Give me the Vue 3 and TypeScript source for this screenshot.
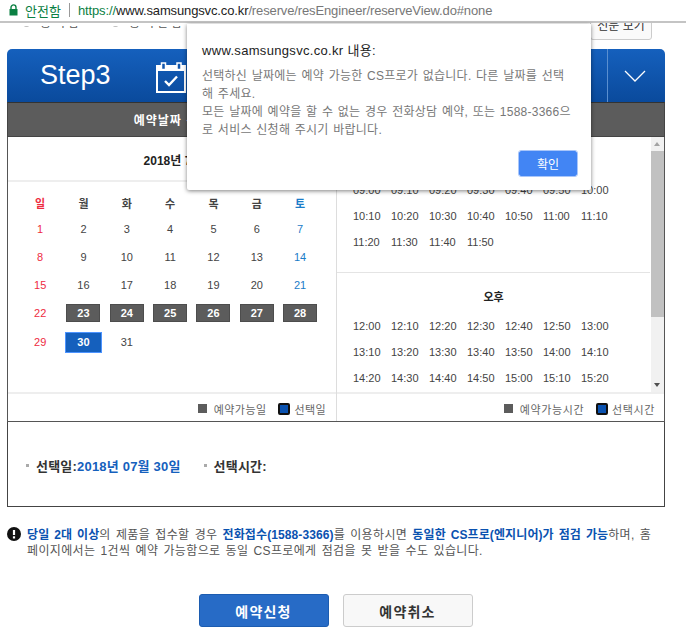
<template>
  <div class="page">
    <header class="chrome">
      <svg class="lock" width="9" height="12" viewBox="0 0 9 12">
        <path d="M2 5.5V3.4a2.5 2.5 0 0 1 5 0v2.1" fill="none" stroke="#0b8043" stroke-width="1.4" />
        <rect x="0.5" y="5" width="8" height="6.5" fill="#0b8043" />
      </svg>
      <span class="secure">안전함</span>
      <span class="chrome-sep"></span>
      <span class="url"><span class="scheme">https://</span><span class="host">www.samsungsvc.co.kr</span>/reserve/resEngineer/reserveView.do#none</span>
    </header>

    <div class="cut-row">
      <div class="cut-radios">
        <span class="cut-radio"><i></i>동의함</span>
        <span class="cut-radio"><i></i>동의안함</span>
      </div>
      <button type="button" class="cut-button">전문 보기</button>
    </div>

    <main class="content">
      <section class="panel">
        <div class="step-head">
          <span class="step-title">Step3</span>
          <svg class="step-icon" width="30" height="31" viewBox="0 0 30 31">
            <rect x="1" y="4" width="28" height="26" fill="none" stroke="#fff" stroke-width="2" />
            <rect x="1" y="4" width="28" height="5" fill="#fff" />
            <rect x="5.500" y="1" width="4" height="6.500" fill="#1256ac" stroke="#fff" stroke-width="1.500" />
            <rect x="21" y="1" width="4" height="6.500" fill="#1256ac" stroke="#fff" stroke-width="1.500" />
            <path d="M9 19l4 4 8-8.500" fill="none" stroke="#fff" stroke-width="2.400" />
          </svg>
          <span class="step-toggle">
            <svg width="22" height="12" viewBox="0 0 22 12"><path d="M1 1l10 10L21 1" fill="none" stroke="#fff" stroke-width="1.300" /></svg>
          </span>
        </div>

        <div class="col-head">
          <span>예약날짜 선택</span>
          <span>예약시간 선택</span>
        </div>

        <div class="booking">
          <div class="date-col">
            <div class="month">2018년 7월</div>
            <div class="calendar">
              <span v-for="w in weekdays" :key="w.label" class="weekday" :class="w.cls">{{ w.label }}</span>
              <span
                v-for="d in days"
                :key="d"
                class="day"
                :class="dayClass(d)"
              ><b>{{ d }}</b></span>
            </div>
            <div class="legend">
              <span class="swatch swatch--gray"></span><span class="legend-text">예약가능일</span>
              <span class="swatch swatch--blue"></span><span class="legend-text legend-text--last">선택일</span>
            </div>
          </div>

          <div class="time-col">
            <div class="time-scroll">
              <div class="time-list">
                <div class="period period--am">
                  <div class="period-title">오전</div>
                  <div class="times">
                    <span v-for="t in morning" :key="t">{{ t }}</span>
                  </div>
                </div>
                <div class="period period--pm">
                  <div class="period-title">오후</div>
                  <div class="times">
                    <span v-for="t in afternoon" :key="t">{{ t }}</span>
                  </div>
                </div>
              </div>
              <div class="scrollbar">
                <span class="arrow arrow--up"></span>
                <span class="thumb"></span>
                <span class="arrow arrow--down"></span>
              </div>
            </div>
            <div class="legend legend--time">
              <span class="swatch swatch--gray"></span><span class="legend-text">예약가능시간</span>
              <span class="swatch swatch--blue"></span><span class="legend-text legend-text--last">선택시간</span>
            </div>
          </div>
        </div>
      </section>

      <section class="summary">
        <span class="summary-item"><i></i>선택일:<em>2018년 07월 30일</em></span>
        <span class="summary-item"><i></i>선택시간:</span>
      </section>

      <section class="notice">
        <svg class="notice-icon" width="14" height="14" viewBox="0 0 14 14">
          <circle cx="7" cy="7" r="7" fill="#111" />
          <path d="M7 3v5" stroke="#fff" stroke-width="2.200" />
          <rect x="5.900" y="9.300" width="2.200" height="2.200" fill="#fff" />
        </svg>
        <p>
          <strong>당일 2대 이상</strong>의 제품을 접수할 경우 <strong>전화접수(1588-3366)</strong>를 이용하시면 <strong>동일한 CS프로(엔지니어)가 점검 가능</strong>하며, 홈<br />페이지에서는 1건씩 예약 가능함으로 동일 CS프로에게 점검을 못 받을 수도 있습니다.
        </p>
      </section>

      <div class="actions">
        <button type="button" class="btn btn--primary">예약신청</button>
        <button type="button" class="btn">예약취소</button>
      </div>
    </main>

    <div class="dialog">
      <h2>www.samsungsvc.co.kr 내용:</h2>
      <p>선택하신 날짜에는 예약 가능한 CS프로가 없습니다. 다른 날짜를 선택<br />해 주세요.<br />모든 날짜에 예약을 할 수 없는 경우 전화상담 예약, 또는 1588-3366으<br />로 서비스 신청해 주시기 바랍니다.</p>
      <div class="dialog-actions">
        <button type="button" class="dialog-ok">확인</button>
      </div>
    </div>
  </div>
</template>

<script setup lang="ts">
const weekdays = [
  { label: '일', cls: 'is-sun' },
  { label: '월', cls: '' },
  { label: '화', cls: '' },
  { label: '수', cls: '' },
  { label: '목', cls: '' },
  { label: '금', cls: '' },
  { label: '토', cls: 'is-sat' },
]

const days = Array.from({ length: 31 }, (_, i) => i + 1)

function dayClass(d: number) {
  if (d === 30) return 'is-selected'
  if (d >= 23 && d <= 28) return 'is-open'
  if (d % 7 === 1) return 'is-sun'
  if (d % 7 === 0) return 'is-sat'
  return ''
}

function buildTimes(startHour: number, count: number) {
  const out: string[] = []
  for (let i = 0; i < count; i++) {
    const mins = startHour * 60 + i * 10
    const h = String(Math.floor(mins / 60)).padStart(2, '0')
    const m = String(mins % 60).padStart(2, '0')
    out.push(`${h}:${m}`)
  }
  return out
}

const morning = buildTimes(9, 18)
const afternoon = buildTimes(12, 21)
</script>

<style>
html,
body {
  margin: 0;
  background: #fff;
  overflow: hidden;
}
</style>

<style scoped>
.page {
  position: relative;
  width: 686px;
  height: 629px;
  overflow: hidden;
  background: #fff;
  font-family: "Liberation Sans", "Noto Sans CJK KR", sans-serif;
  font-size: 11px;
  color: #444;
}

.chrome {
  display: flex;
  align-items: center;
  height: 20px;
  padding: 0 0 1px 9px;
  background: #fff;
  border-bottom: 2px solid #c4c4c4;
  font-size: 13px;
  white-space: nowrap;
}

.lock {
  margin-right: 7px;
}

.secure {
  color: #0b8043;
  font-size: 13px;
}

.chrome-sep {
  width: 1px;
  height: 14px;
  margin: 0 8px;
  background: #999;
}

.url {
  color: #777;
  letter-spacing: -0.13px;
}

.scheme {
  color: #0b8043;
}

.host {
  color: #222;
}

.cut-row {
  display: flex;
  justify-content: space-between;
  height: 17px;
  overflow: hidden;
  padding: 0 34px 0 22px;
}

.cut-radios {
  display: flex;
  margin-top: -10px;
  clip-path: inset(13px 0 0 0);
}

.cut-radio {
  display: flex;
  align-items: center;
  gap: 9px;
  width: 89px;
  height: 16px;
  font-size: 12px;
  letter-spacing: 3px;
  white-space: nowrap;
  color: #555;
}

.cut-radio i {
  flex: none;
  width: 7px;
  height: 7px;
  margin-top: 2px;
  border: 1px solid #aaa;
  border-radius: 50%;
}

.cut-button {
  flex: none;
  width: 62px;
  height: 32px;
  margin-top: -15px;
  padding: 0;
  border: 1px solid #ccc;
  border-radius: 3px;
  background: #fafafa;
  font: 12px "Liberation Sans", "Noto Sans CJK KR", sans-serif;
  color: #333;
}

.content {
  padding: 9px 21px 0 7px;
}

.panel {
  width: 658px;
}

.step-head {
  display: flex;
  align-items: center;
  height: 53px;
  border-radius: 5px 5px 0 0;
  background: linear-gradient(#1560bd, #0a4a9c);
  color: #fff;
}

.step-title {
  margin-left: 33px;
  font-size: 27px;
}

.step-icon {
  margin-left: 45px;
  margin-top: 4px;
}

.step-toggle {
  display: flex;
  align-items: center;
  justify-content: center;
  width: 58px;
  height: 100%;
  margin-left: auto;
  padding-right: 3px;
  border-left: 1px solid #5a8fd0;
  box-sizing: border-box;
}

.col-head {
  display: grid;
  grid-template-columns: 328px 328px;
  height: 35px;
  box-sizing: border-box;
  border: 1px solid #444;
  border-top-color: #333;
  background: #5c5c5c;
  color: #fff;
  font-weight: 700;
  font-size: 12px;
  letter-spacing: 1px;
  line-height: 36px;
  text-align: center;
}

.booking {
  display: grid;
  grid-template-columns: 329px 327px;
  height: 285px;
  box-sizing: border-box;
  border: 1px solid #555;
  border-top: 0;
}

.date-col,
.time-col {
  display: flex;
  flex-direction: column;
  min-width: 0;
}

.date-col {
  border-right: 1px solid #ddd;
  box-sizing: border-box;
}

.month {
  height: 45px;
  box-sizing: border-box;
  padding: 14px 0 0 2px;
  border-bottom: 2px solid #eee;
  font-size: 12px;
  font-weight: 700;
  color: #222;
  text-align: center;
}

.calendar {
  flex: 1;
  display: grid;
  grid-template-columns: repeat(7, 43.330px);
  grid-template-rows: 25px 28px 28px 28px 28px 30px;
  padding: 8px 0 0 10.500px;
  align-content: start;
}

.weekday,
.day {
  display: flex;
  align-items: center;
  justify-content: center;
  font-size: 11px;
  color: #444;
}

.weekday {
  font-weight: 700;
}

.day b {
  display: flex;
  align-items: center;
  justify-content: center;
  font-weight: 400;
  width: 34px;
  height: 18px;
}

.is-sun,
.is-sun b {
  color: #ee2b3f;
}

.is-sat,
.is-sat b {
  color: #1b7cc8;
}

.is-open b {
  background: #5c5c5c;
  border: 1px solid #4d4d4d;
  color: #fff;
  font-weight: 700;
  box-sizing: border-box;
}

.is-selected b {
  width: 37px;
  height: 21px;
  box-sizing: border-box;
  background: #1560bd;
  border: 1px solid #4d94ff;
  color: #fff;
  font-weight: 700;
}

.legend {
  display: flex;
  align-items: center;
  justify-content: flex-end;
  height: 29px;
  border-top: 2px solid #eee;
  box-sizing: border-box;
  padding: 2px 10px 0 0;
  font-size: 11px;
  letter-spacing: 0.4px;
  color: #666;
}

.legend--time {
  padding-right: 9px;
  letter-spacing: 0.6px;
}

.swatch {
  display: block;
  box-sizing: border-box;
}

.swatch--gray {
  width: 9px;
  height: 9px;
  background: #5c5c5c;
  margin-right: 7px;
}

.swatch--blue {
  width: 12px;
  height: 12px;
  background: #0a52b0;
  border: 2px solid #111;
  border-radius: 2px;
  margin-right: 4px;
}

.legend-text {
  margin-right: 12px;
}

.legend-text--last {
  margin-right: 0;
}

.time-scroll {
  flex: 1;
  display: flex;
  min-height: 0;
  overflow: hidden;
}

.time-list {
  flex: 1;
  min-width: 0;
  overflow: hidden;
}

.period {
  padding-left: 16px;
  box-sizing: border-box;
}

.period--am {
  height: 136px;
  border-bottom: 1px solid #e4e4e4;
  padding-top: 15px;
}

.period--pm {
  padding-top: 15px;
}

.period-title {
  height: 25px;
  font-weight: 700;
  font-size: 11px;
  color: #222;
  text-align: center;
  padding-right: 16px;
}

.times {
  display: grid;
  grid-template-columns: repeat(7, 38px);
  grid-auto-rows: 26px;
  font-size: 11px;
  color: #444;
  line-height: 26px;
}

.scrollbar {
  position: relative;
  flex: 0 0 13px;
  margin-left: 1px;
  background: #f1f1f1;
}

.thumb {
  position: absolute;
  top: 14px;
  left: 0;
  right: 0;
  height: 166px;
  background: #c1c1c1;
}

.arrow {
  position: absolute;
  left: 3px;
  width: 0;
  height: 0;
  border-left: 3.500px solid transparent;
  border-right: 3.500px solid transparent;
}

.arrow--up {
  top: 5px;
  border-bottom: 4px solid #a3a3a3;
}

.arrow--down {
  bottom: 5px;
  border-top: 4px solid #505050;
}

.summary {
  display: flex;
  align-items: center;
  height: 85px;
  box-sizing: border-box;
  width: 658px;
  padding: 2px 0 0 18px;
  border: 1px solid #444;
  border-top: 0;
  font-size: 13px;
  letter-spacing: 0.2px;
  font-weight: 700;
  color: #333;
}

.summary-item {
  display: flex;
  align-items: center;
  margin-right: 23px;
}

.summary-item i {
  width: 3px;
  height: 3px;
  margin-right: 7px;
  background: #aaa;
}

.summary-item em {
  font-style: normal;
  color: #1560bd;
}

.notice {
  display: flex;
  width: 660px;
  margin-top: 20px;
  font-size: 12px;
  line-height: 16px;
  letter-spacing: 0.35px;
  word-spacing: 1.500px;
  white-space: nowrap;
  color: #555;
}

.notice-icon {
  flex: none;
  margin: 0 6px 0 0;
}

.notice p {
  margin: 0;
}

.notice strong {
  font-weight: 700;
  letter-spacing: 0.1px;
  color: #0a52b0;
}

.actions {
  display: flex;
  justify-content: center;
  gap: 14px;
  margin-top: 35px;
  width: 657px;
}

.btn {
  width: 130px;
  height: 33px;
  border: 1px solid #ccc;
  border-radius: 3px;
  background: #f8f8f8;
  font: 700 14px "Liberation Sans", "Noto Sans CJK KR", sans-serif;
  letter-spacing: 1.200px;
  color: #333;
}

.btn--primary {
  background: #276bc6;
  border-color: #1c5cb0;
  color: #fff;
}

.dialog {
  position: absolute;
  left: 187px;
  top: 24px;
  width: 404px;
  height: 166px;
  box-sizing: border-box;
  padding: 16px 15px 0 15px;
  background: #fff;
  border-radius: 0 0 2px 2px;
  box-shadow: 0 1px 4px rgba(0, 0, 0, 0.5);
}

.dialog h2 {
  margin: 0 0 8px;
  font-size: 13px;
  letter-spacing: 0.32px;
  font-weight: 400;
  color: #222;
}

.dialog p {
  margin: 0;
  font-size: 12px;
  letter-spacing: 0.25px;
  word-spacing: 1px;
  line-height: 18px;
  white-space: nowrap;
  color: #777;
}

.dialog-actions {
  position: absolute;
  right: 14px;
  bottom: 14px;
}

.dialog-ok {
  width: 58px;
  height: 25px;
  border: 1px solid #4285f4;
  outline: 1px solid #a9c6fa;
  border-radius: 2px;
  background: #4285f4;
  color: #fff;
  font: 12px "Liberation Sans", "Noto Sans CJK KR", sans-serif;
}
</style>
